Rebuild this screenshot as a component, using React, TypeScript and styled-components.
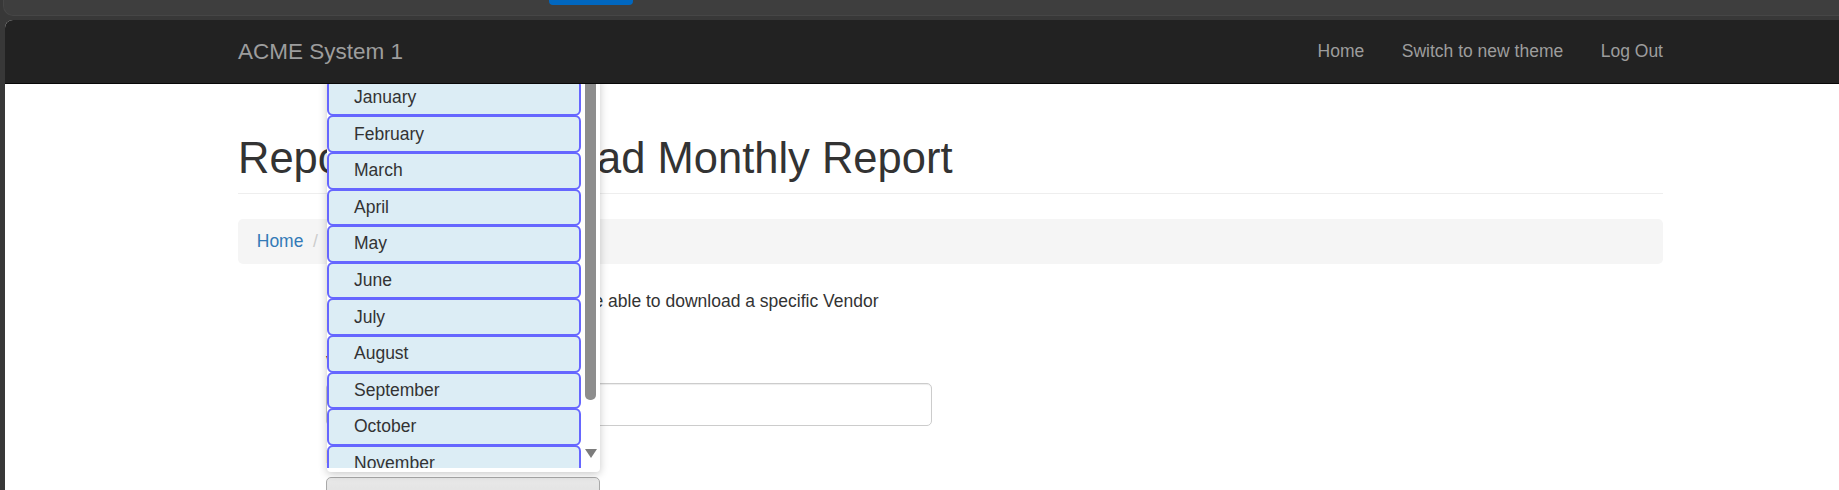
import React from 'react'
import styled, { createGlobalStyle } from 'styled-components'

const MONTHS = [
  'January', 'February', 'March', 'April', 'May', 'June',
  'July', 'August', 'September', 'October', 'November', 'December'
]

const NAV_LINKS = ['Home', 'Switch to new theme', 'Log Out']

const GlobalStyle = createGlobalStyle`
  html, body {
    margin: 0;
    padding: 0;
    background: #383838;
  }
  * {
    box-sizing: border-box;
  }
  body {
    font-family: "Liberation Sans", Helvetica, Arial, sans-serif;
    font-size: 17.5px;
    line-height: 25px;
    color: #333;
  }
`

export default function App() {
  return (
    <>
      <GlobalStyle />
      <Frame>
        <ChromeBar>
          <ChromeStrip>
            <BlueTab />
          </ChromeStrip>
        </ChromeBar>
        <Workspace>
          <Gutter />
          <Page>
            <Navbar>
              <NavInner>
                <Brand>ACME System 1</Brand>
                <NavLinks>
                  {NAV_LINKS.map(l => <NavLink key={l}>{l}</NavLink>)}
                </NavLinks>
              </NavInner>
            </Navbar>

            <Container>
              <PageHeader>
                <Title>Reports &gt;&nbsp; Download Monthly Report</Title>
              </PageHeader>
              <Breadcrumb>
                <Crumb><CrumbLink>Home</CrumbLink></Crumb>
                <Crumb><CrumbLink>Report</CrumbLink></Crumb>
                <Crumb active>Download Monthly Report</Crumb>
              </Breadcrumb>

              <FormColumn>
                <Intro>
                  From this page, ACME users will be able to download a specific Vendor Monthly Report.
                </Intro>
                <FormGroup>
                  <Label htmlFor="vendor">Vendor</Label>
                  <TextInput id="vendor" />
                </FormGroup>
                <FormGroup>
                  <Label htmlFor="month">Month</Label>
                  <SelectBox id="month">February</SelectBox>
                </FormGroup>
              </FormColumn>
            </Container>

            <MonthPopup>
              <OptionList>
                {MONTHS.map(m => <MonthOption key={m}>{m}</MonthOption>)}
              </OptionList>
              <ScrollTrack>
                <ScrollThumb />
                <ScrollArrow />
              </ScrollTrack>
            </MonthPopup>
          </Page>
        </Workspace>
      </Frame>
    </>
  )
}

const Frame = styled.div`
  width: 1839px;
  height: 490px;
  overflow: hidden;
  background: #383838;
  display: flex;
  flex-direction: column;
`
const ChromeBar = styled.div`
  flex: none;
  height: 20px;
`
const ChromeStrip = styled.div`
  display: flex;
  height: 16px;
  margin-left: 3px;
  background: #3e3e3e;
  border-left: 1px solid #464646;
  border-bottom: 1px solid #464646;
  border-bottom-left-radius: 10px;
`
const BlueTab = styled.div`
  width: 84px;
  height: 5px;
  margin-left: 545px;
  background: #0067c0;
  border-radius: 0 0 4px 4px;
`
const Workspace = styled.div`
  flex: 1;
  display: flex;
  min-height: 0;
`
const Gutter = styled.div`
  flex: none;
  width: 5px;
`
const Page = styled.div`
  position: relative;
  flex: 1;
  background: #fff;
  border-top-left-radius: 8px;
  overflow: hidden;
`
const Navbar = styled.nav`
  position: relative;
  z-index: 3;
  height: 63.5px;
  background: #222;
  border-bottom: 1px solid #080808;
`
const NavInner = styled.div`
  display: flex;
  justify-content: space-between;
  width: 1425px;
  margin-left: 233px;
`
const Brand = styled.a`
  padding: 18.75px 0;
  font-size: 22.5px;
  line-height: 25px;
  color: #9d9d9d;
`
const NavLinks = styled.ul`
  display: flex;
  margin: 0 -18.75px 0 0;
  padding: 0;
  list-style: none;
`
const NavLink = styled.li`
  padding: 18.75px;
  line-height: 25px;
  color: #9d9d9d;
`
const Container = styled.div`
  width: 1425px;
  margin-left: 233px;
`
const PageHeader = styled.div`
  margin-top: 51.5px;
  padding-bottom: 10px;
  border-bottom: 1px solid #eee;
`
const Title = styled.h1`
  margin: 0;
  font-size: 43.5px;
  line-height: 47.85px;
  font-weight: 500;
  color: #333;
`
const Breadcrumb = styled.ol`
  display: flex;
  margin: 25px 0 25px;
  padding: 10px 18.75px;
  list-style: none;
  background: #f5f5f5;
  border-radius: 5px;
  line-height: 25px;
`
const Crumb = styled.li<{ active?: boolean }>`
  color: ${({ active }) => active ? '#777' : 'inherit'};
  & + &::before {
    content: '/\\00a0';
    padding: 0 6.25px 0 9.5px;
    color: #ccc;
  }
`
const CrumbLink = styled.a`
  color: #337ab7;
`
const FormColumn = styled.div`
  width: 606px;
  margin-left: 88px;
`
const Intro = styled.p`
  margin: 0 0 12.5px;
`
const FormGroup = styled.div`
  margin-bottom: 18.75px;
`
const Label = styled.label`
  display: block;
  margin-bottom: 7px;
  font-weight: 700;
`
const TextInput = styled.input`
  display: block;
  width: 100%;
  height: 42.5px;
  padding: 7.5px 15px;
  font: inherit;
  border: 1px solid #ccc;
  border-radius: 5px;
  box-shadow: inset 0 1px 1px rgba(0, 0, 0, 0.075);
`
const SelectBox = styled.div`
  display: flex;
  align-items: center;
  width: 274px;
  height: 42.5px;
  padding: 0 15px;
  background: linear-gradient(#e9e9e9, #dadada);
  border: 1px solid #a9a9a9;
  border-radius: 5px;
  color: #222;
`
const MonthPopup = styled.div`
  position: absolute;
  z-index: 2;
  top: 58px;
  left: 322px;
  display: flex;
  width: 273px;
  height: 394px;
  padding-bottom: 4px;
  background: #fff;
  border-radius: 0 0 4px 4px;
  box-shadow: 0 2px 8px rgba(0, 0, 0, 0.22);
`
const OptionList = styled.div`
  width: 254px;
  height: 100%;
  padding-top: 0.8px;
  overflow: hidden;
`
const MonthOption = styled.div`
  display: flex;
  align-items: center;
  height: 37.6px;
  padding-left: 25px;
  background: #dcedf5;
  border: 2px solid #6666ff;
  border-radius: 6px;
  color: #333;
  & + & {
    margin-top: -1px;
  }
`
const ScrollTrack = styled.div`
  display: flex;
  flex-direction: column;
  flex: 1;
  padding-left: 4px;
`
const ScrollThumb = styled.div`
  width: 11px;
  height: 322px;
  background: #8d8d8d;
  border-radius: 0 0 5px 5px;
`
const ScrollArrow = styled.div`
  width: 0;
  height: 0;
  margin-top: 49px;
  border-left: 6px solid transparent;
  border-right: 6px solid transparent;
  border-top: 9px solid #7c7c7c;
`
